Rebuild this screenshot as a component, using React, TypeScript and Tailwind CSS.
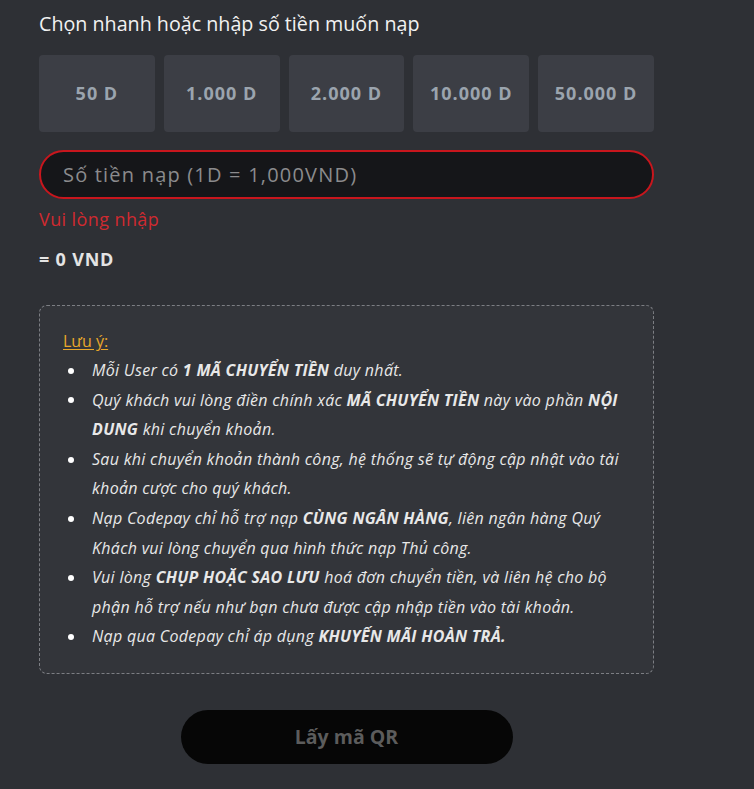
import React, { useState } from 'react';

const amounts = ['50 D', '1.000 D', '2.000 D', '10.000 D', '50.000 D'];

const notes: React.ReactNode[] = [
  <>Mỗi User có <b>1 MÃ CHUYỂN TIỀN</b> duy nhất.</>,
  <>Quý khách vui lòng điền chính xác <b>MÃ CHUYỂN TIỀN</b> này vào phần <b>NỘI DUNG</b> khi chuyển khoản.</>,
  <>Sau khi chuyển khoản thành công, hệ thống sẽ tự động cập nhật vào tài khoản cược cho quý khách.</>,
  <>Nạp Codepay chỉ hỗ trợ nạp <b>CÙNG NGÂN HÀNG</b>, liên ngân hàng Quý Khách vui lòng chuyển qua hình thức nạp Thủ công.</>,
  <>Vui lòng <b>CHỤP HOẶC SAO LƯU</b> hoá đơn chuyển tiền, và liên hệ cho bộ phận hỗ trợ nếu như bạn chưa được cập nhập tiền vào tài khoản.</>,
  <>Nạp qua Codepay chỉ áp dụng <b>KHUYẾN MÃI HOÀN TRẢ.</b></>,
];

export default function App() {
  const [value, setValue] = useState('');

  return (
    <div className="min-h-[789px] w-full bg-[#2e3035] font-['Open_Sans',sans-serif] text-white">
      <div className="w-[615px] ml-[39px] pt-[10px]">
        <h2 className="text-[19.7px] leading-[28px] text-[#f2f2f2]">Chọn nhanh hoặc nhập số tiền muốn nạp</h2>

        <div className="mt-[17px] grid grid-cols-5 gap-[9px]">
          {amounts.map(a => (
            <button
              key={a}
              className="h-[77px] rounded-[4px] bg-[#3c3e45] text-[18px] font-bold tracking-[1px] text-[#9ba4ae]"
            >
              {a}
            </button>
          ))}
        </div>

        <input
          value={value}
          onChange={e => setValue(e.target.value)}
          placeholder="Số tiền nạp (1D = 1,000VND)"
          className="mt-[18px] block h-[49px] w-full rounded-full border-2 border-[#c8161d] bg-[#151619] px-[22px] text-[20px] tracking-[1.2px] text-white placeholder:text-[#8b8b8d] outline-none"
        />
        <p className="mt-[7px] text-[18px] leading-[26px] tracking-[0.4px] text-[#d02a30]">Vui lòng nhập</p>

        <p className="mt-[14px] text-[18px] font-bold leading-[26px] tracking-[0.8px] text-[#e4e4e4]">= 0 VND</p>

        <div className="mt-[33px] h-[369px] rounded-[8px] border border-dashed border-[#7c7e83] bg-[#33353a] pl-[23px] pr-[22px] pt-[23px]">
          <p className="text-[16px] leading-[24px] text-[#e8a72a] underline underline-offset-2">Lưu ý:</p>
          <ul className="mt-[3px] text-[16px] leading-[29.6px] tracking-[0.3px] italic text-[#e8e8e8]">
            {notes.map((n, i) => (
              <li key={i} className="flex">
                <span className="flex h-[29.6px] w-[29px] shrink-0 items-center pl-[5px]">
                  <span className="h-[6px] w-[6px] rounded-full bg-white" />
                </span>
                <span>{n}</span>
              </li>
            ))}
          </ul>
        </div>

        <div className="mt-[36px] flex justify-center">
          <button className="h-[54px] w-[332px] rounded-full bg-[#060606] text-[19.5px] font-bold text-[#5c5c5c]">
            Lấy mã QR
          </button>
        </div>
      </div>
    </div>
  );
}
